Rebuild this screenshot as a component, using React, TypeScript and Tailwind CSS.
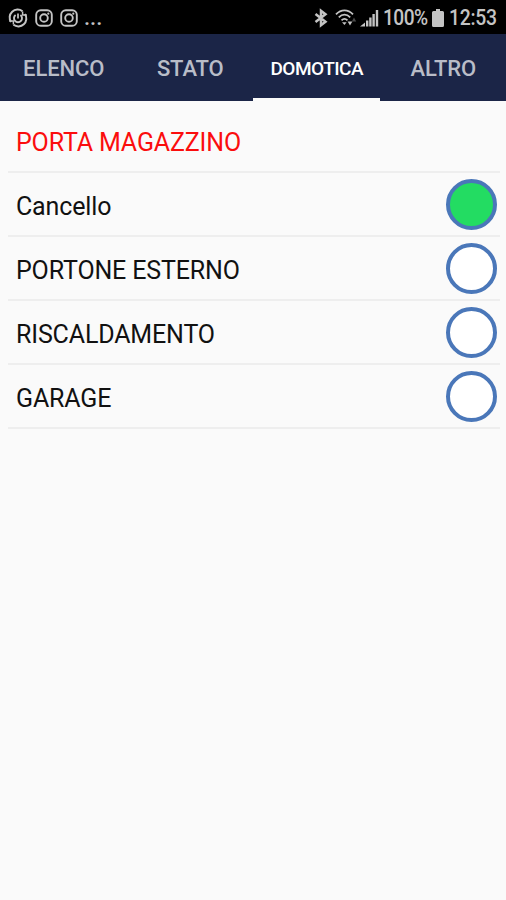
import clsx from "clsx";

const TABS = [
  { label: "ELENCO", className: "pt-[6px] pl-px text-[22px] tracking-[-0.1px]" },
  { label: "STATO", className: "pt-[6px] pl-px text-[22px] tracking-[-0.1px]" },
  { label: "DOMOTICA", className: "pt-[5px] pl-px text-[19px] tracking-[-0.5px]", active: true },
  { label: "ALTRO", className: "pt-[6px] pl-px text-[22px] tracking-[-0.1px]" },
];

const DEVICES = [
  { name: "PORTA MAGAZZINO", alert: true },
  { name: "Cancello", toggle: true, on: true },
  { name: "PORTONE ESTERNO", toggle: true },
  { name: "RISCALDAMENTO", toggle: true },
  { name: "GARAGE", toggle: true },
];

function SyncIcon() {
  return (
    <svg width="20" height="20" viewBox="0 0 20 20" fill="none" stroke="currentColor">
      <path d="M14.5 3.2A8 8 0 0 0 3 14M5.5 16.8A8 8 0 0 0 17 6" strokeWidth="2" />
      <path d="M1.2 13h4.2v3.4M18.8 7h-4.2V3.6" strokeWidth="1.5" />
      <path d="M7.6 7A4 4 0 1 0 12.4 7" strokeWidth="1.9" />
      <path d="M10 5.5V10.5" strokeWidth="1.7" />
    </svg>
  );
}

function InstagramIcon() {
  return (
    <svg width="18" height="18" viewBox="0 0 18 18" fill="none" stroke="currentColor">
      <rect x="1.2" y="1.2" width="15.6" height="15.6" rx="4.6" strokeWidth="1.9" />
      <circle cx="9" cy="9" r="3.8" strokeWidth="1.9" />
      <circle cx="13.3" cy="4.7" r="1.1" fill="currentColor" stroke="none" />
    </svg>
  );
}

function BluetoothIcon() {
  return (
    <svg width="14" height="20" viewBox="0 0 14 20" fill="none" stroke="currentColor" strokeWidth="2.5">
      <path d="M1.5 6l10 7.8L7 17.3V2.7l4.5 3.5-10 7.8" />
    </svg>
  );
}

function WifiIcon() {
  return (
    <svg width="22" height="19" viewBox="0 0 22 19" fill="none" stroke="currentColor">
      <path d="M1 6.3C6 1 13 1 18 6.3M3.8 9.3c3.6-3.6 7.8-3.6 11.4 0M6.5 12.3c2-1.9 4-1.9 6 0" strokeWidth="1.8" />
      <path d="M7 14.2h4.6L9.5 17z" fill="currentColor" stroke="none" />
      <path d="M12.6 13.4h4.8L15 17.6z" fill="currentColor" stroke="none" />
      <path d="M16.8 13.5l2.2-4 2.2 4z" fill="#4a4a4a" stroke="none" />
    </svg>
  );
}

function SignalIcon() {
  return (
    <svg width="19" height="18" viewBox="0 0 19 18" fill="currentColor">
      <path d="M0 17.5l5-4v4zM6 11.5h2.4v6H6zM9.2 8.5h2.4v9H9.2zM12.4 5h2.4v12.5h-2.4z" />
      <path d="M15.8 1h2.4v16.5h-2.4z" />
    </svg>
  );
}

function BatteryIcon() {
  return (
    <svg width="12" height="18" viewBox="0 0 12 18" fill="currentColor">
      <path d="M4 0h4v2h2.5q1.5 0 1.5 1.5v13q0 1.5-1.5 1.5h-9Q0 18 0 16.5v-13Q0 2 1.5 2H4z" />
    </svg>
  );
}

function StatusBar() {
  return (
    <div className="flex h-[34px] items-center justify-between bg-black pt-px pl-2 pr-[10px] text-[#c4c4c4]">
      <div className="flex items-center">
        <SyncIcon />
        <span className="ml-[7px]"><InstagramIcon /></span>
        <span className="ml-[7px]"><InstagramIcon /></span>
        <span className="ml-[6px] text-[22px] font-medium leading-none">...</span>
      </div>
      <div className="flex items-center">
        <BluetoothIcon />
        <span className="ml-[7px]"><WifiIcon /></span>
        <span className="ml-[3px]"><SignalIcon /></span>
        <span className="ml-[4px] w-[46px] origin-left scale-x-87 whitespace-nowrap pt-px text-[22px] font-medium leading-none tracking-[-0.6px]">100%</span>
        <span className="ml-[3px]"><BatteryIcon /></span>
        <span className="ml-[5px] w-[47px] origin-left scale-x-88 whitespace-nowrap pt-px text-[22px] font-medium leading-none tracking-[-0.3px]">12:53</span>
      </div>
    </div>
  );
}

export default function App() {
  return (
    <div className="min-h-screen w-full bg-[#fafafa] font-[Roboto,sans-serif]">
      <StatusBar />

      {/* Tabs */}
      <nav className="grid h-[67px] grid-cols-4 bg-[#1b2547]">
        {TABS.map((tab) => (
          <button
            key={tab.label}
            className={clsx(
              "flex items-center justify-center border-b-3 font-medium leading-none",
              tab.className,
              tab.active ? "border-[#fafafa] text-white" : "border-transparent text-[#b9bdc8]"
            )}
          >
            {tab.label}
          </button>
        ))}
      </nav>

      {/* Device list */}
      <ul className="ml-2 mr-[6px] pt-2">
        {DEVICES.map((device) => (
          <li
            key={device.name}
            className="flex h-16 items-center justify-between border-b-2 border-[#eeeeee] pl-2 pr-[3px]"
          >
            <span
              className={clsx(
                "pt-1 text-[25px] leading-none tracking-[-0.15px]",
                device.alert ? "text-[#fb0d0d]" : "text-[#111111]"
              )}
            >
              {device.name}
            </span>
            {device.toggle && (
              <span
                className={clsx(
                  "size-[51px] rounded-full border-4 border-[#4a77b9]",
                  device.on ? "bg-[#23dc62]" : "bg-white"
                )}
              />
            )}
          </li>
        ))}
      </ul>
    </div>
  );
}
